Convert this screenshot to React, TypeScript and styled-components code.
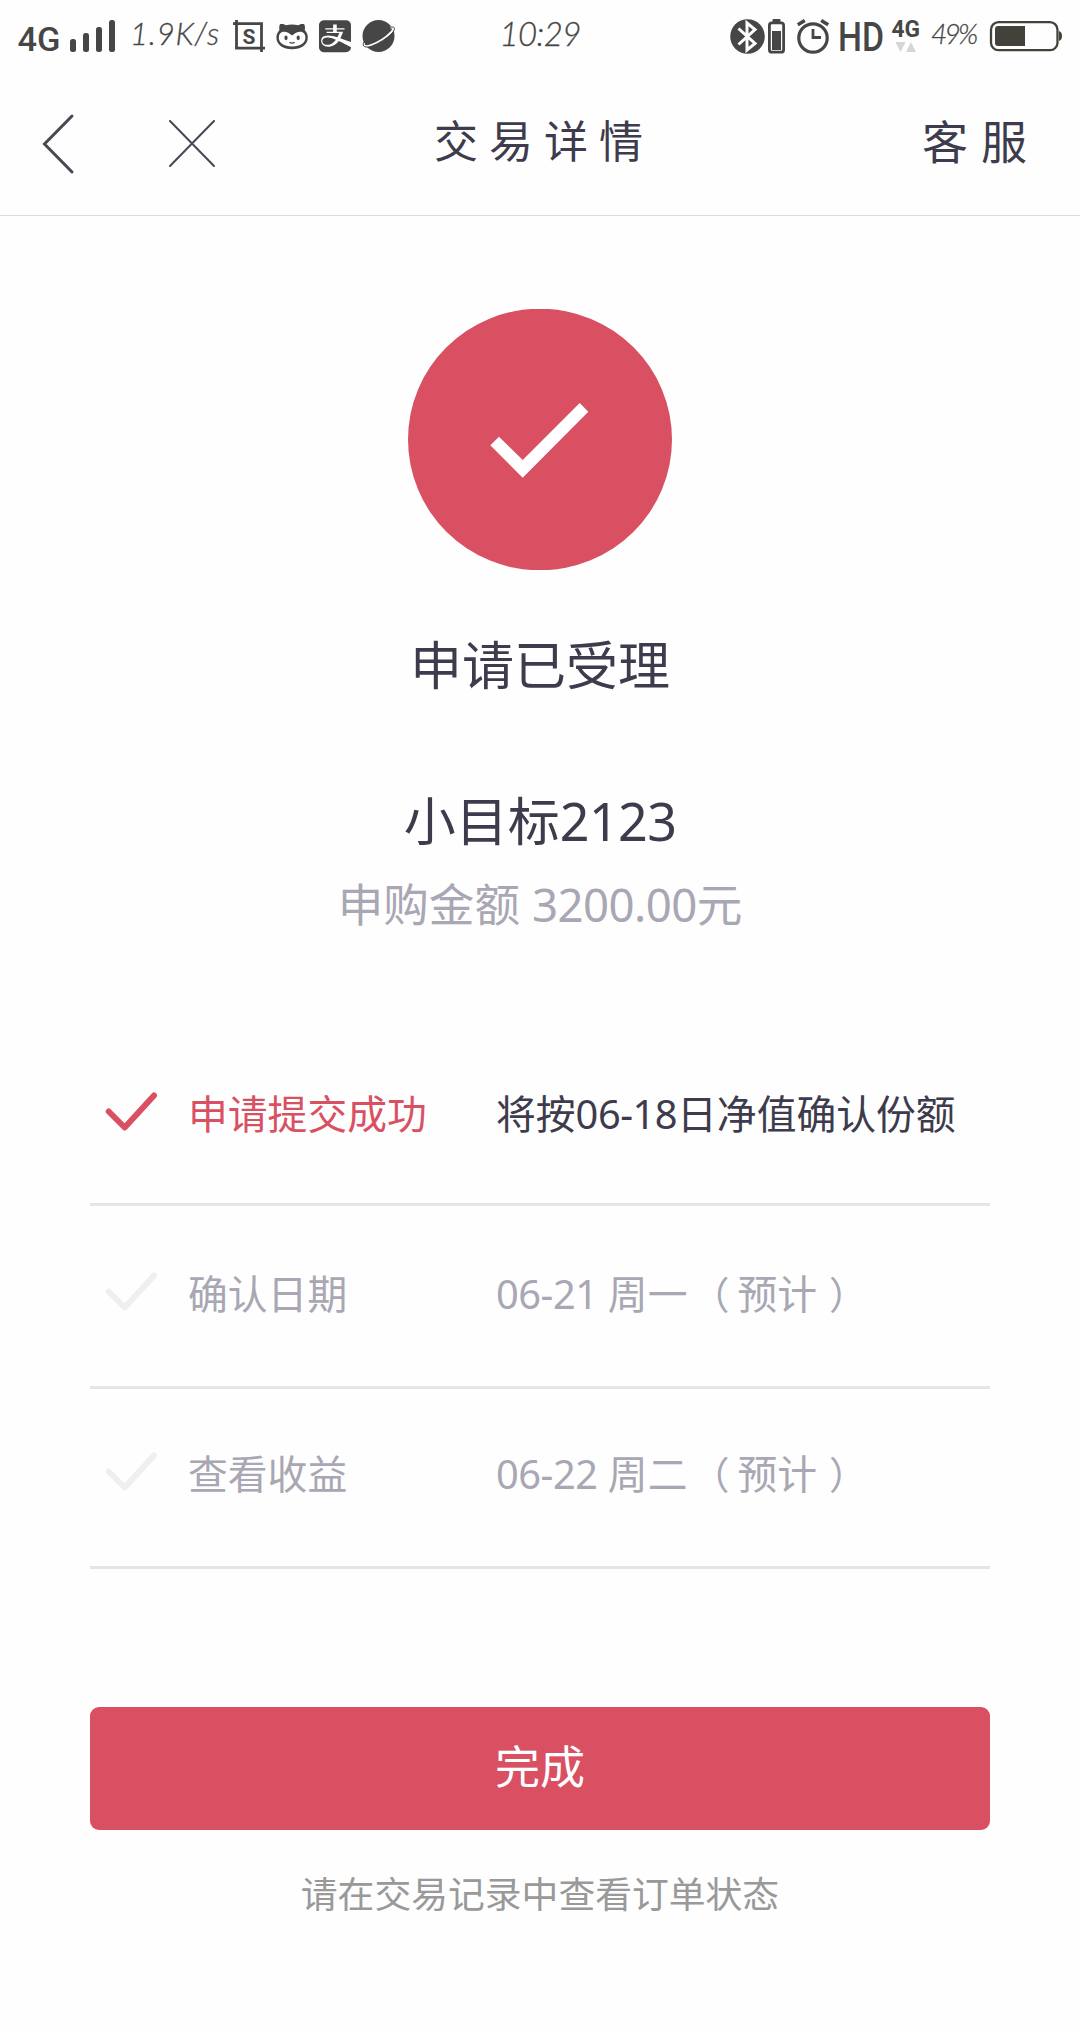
import React from "react";
import styled, { createGlobalStyle } from "styled-components";
import { FaAlipay } from "react-icons/fa";

const ink = "#464646";
const dark = "#3d3b4c";
const muted = "#a8a7b3";
const accent = "#d95063";

const GlobalStyle = createGlobalStyle`
  * { box-sizing: border-box; }
  body {
    margin: 0;
    background: #fefefe;
    font-family: "Noto Sans", "Noto Sans CJK SC", sans-serif;
    color: ${dark};
  }
`;

const Screen = styled.div`
  width: 1080px;
  height: 2034px;
  display: flex;
  flex-direction: column;
  overflow: hidden;
`;

/* ---------- status bar ---------- */

const StatusBar = styled.div`
  display: grid;
  grid-template-columns: 1fr auto 1fr;
  height: 72px;
  padding: 0 16px 0 18px;
  color: ${ink};
`;

const Cluster = styled.div<{ $end?: boolean }>`
  display: flex;
  align-items: flex-start;
  justify-content: ${(p) => (p.$end ? "flex-end" : "flex-start")};
`;

const Glyph = styled.svg<{ $gap?: number }>`
  display: block;
  flex: none;
  height: 72px;
  margin-left: ${(p) => p.$gap ?? 0}px;
  overflow: visible;
`;

const HandText = styled.span<{ $width: number; $size: number; $gap?: number; $spacing?: number }>`
  flex: none;
  width: ${(p) => p.$width}px;
  margin-left: ${(p) => p.$gap ?? 0}px;
  font: italic 300 ${(p) => p.$size}px / 67px Lato, sans-serif;
  letter-spacing: ${(p) => p.$spacing ?? 0}px;
  white-space: nowrap;
  -webkit-text-stroke: 0.3px ${ink};
`;

const AppBadge = styled.span`
  display: flex;
  flex: none;
  align-items: center;
  justify-content: center;
  width: 32px;
  height: 32px;
  margin: 20px 0 0 10px;
  svg {
    flex: none;
    width: 32px;
    height: 36.5px;
  }
`;

type StripProps = { x: number; w: number; gap?: number; children: React.ReactNode };

/* Every status icon shares the bar's vertical scale; x is its left edge in the bar. */
const Strip = ({ x, w, gap, children }: StripProps) => (
  <Glyph $gap={gap} width={w} height={72} viewBox={`${x} 0 ${w} 72`} fill={ink}>
    {children}
  </Glyph>
);

const NetworkLabel = () => (
  <Strip x={18} w={44}>
    <text x="17.5" y="51" fontFamily="Roboto" fontWeight="500" fontSize="33" textLength="43" lengthAdjust="spacingAndGlyphs">
      4G
    </text>
  </Strip>
);

const Signal = () => (
  <Strip x={68} w={50} gap={6}>
    <rect x="70" y="39" width="6" height="13" rx="2.5" />
    <rect x="83" y="33" width="6" height="19" rx="2.5" />
    <rect x="96" y="27" width="6" height="25" rx="2.5" />
    <rect x="109" y="20" width="6" height="32" rx="2.5" />
  </Strip>
);

const CropS = () => (
  <Strip x={231} w={36} gap={9}>
    <path d="M233 23.7H261.5V52M236.5 20V48.2H265" fill="none" stroke={ink} strokeWidth="2.8" />
    <text x="249" y="43.5" textAnchor="middle" fontFamily="Roboto" fontWeight="700" fontSize="21">
      S
    </text>
  </Strip>
);

const Cat = () => (
  <Strip x={275} w={34} gap={8}>
    <path d="M280 24.2c2.4-.5 4.200 .2 5.900 1a30 30 0 0 1 12.400 0c1.700-.8 3.500-1.500 5.900-1 1 2.300 .9 4 .5 5.800 2 2.200 3.100 4.500 3.100 7.400 0 7.600-6.900 11.800-15.700 11.800s-15.700-4.200-15.700-11.800c0-2.900 1.100-5.200 3.100-7.400-.4-1.800-.5-3.500 .5-5.800z" />
    <path
      d="M283 31.800c3.200-.4 6 .8 9.100 3.800 3.100-3 5.900-4.200 9.100-3.800 2.800.7 4.200 3 4.200 5.700 0 5.700-5 8.900-13.300 8.900s-13.300-3.200-13.300-8.900c0-2.700 1.400-5 4.200-5.700z"
      fill="#fefefe"
    />
    <ellipse cx="286" cy="37.800" rx="1.600" ry="2.400" />
    <ellipse cx="298.200" cy="37.800" rx="1.600" ry="2.400" />
    <path d="M289.500 42.300q2.600 1.800 5.200 0" fill="none" stroke={ink} strokeWidth="1.300" />
  </Strip>
);

const Planet = () => (
  <Strip x={361} w={36} gap={10}>
    <circle cx="378.500" cy="36" r="16" />
    <path
      d="M364.200 43.200C362.500 46.500 366 47 371 45.200C378 42.600 386 37.600 391 32.400C394.600 28.600 394.500 26.500 390.500 27.600"
      fill="none"
      stroke="#fefefe"
      strokeWidth="2.200"
    />
    <path
      d="M363.600 42.500C361.500 47 366 48 371.500 46.200C379 43.400 387 38.400 392 33.200C396 28.600 395 26 390.800 27.300"
      fill="none"
      stroke={ink}
      strokeWidth="1"
      strokeLinecap="round"
    />
  </Strip>
);

const Bluetooth = () => (
  <Strip x={730} w={35}>
    <circle cx="747.500" cy="36.500" r="17.300" />
    <path d="M738.500 28.500L755 43.500L747 50V23L755 29.500L738.500 44.500" fill="none" stroke="#fefefe" strokeWidth="3" />
  </Strip>
);

const DeviceBattery = () => (
  <Strip x={768} w={17} gap={3}>
    <rect x="772.500" y="19" width="8" height="4" rx="1" />
    <rect x="769.400" y="22.800" width="14.200" height="29.400" rx="2.500" fill="none" stroke={ink} strokeWidth="2.800" />
    <rect x="772" y="31" width="9" height="19" />
  </Strip>
);

const Alarm = () => (
  <Strip x={796} w={34} gap={11}>
    <g fill="none" stroke={ink} strokeWidth="3.200">
      <circle cx="813" cy="38" r="14.200" />
      <path d="M813 29V37.500H821" strokeWidth="2.800" />
      <path d="M797.800 24.700L804.800 20.400M821.200 20.400L828.200 24.700" strokeWidth="3.500" />
    </g>
  </Strip>
);

const HdLabel = () => (
  <Strip x={838} w={48} gap={8}>
    <text x="838" y="51" fontFamily="Roboto" fontWeight="500" fontSize="40.500" textLength="46" lengthAdjust="spacingAndGlyphs">
      HD
    </text>
  </Strip>
);

const DataLabel = () => (
  <Strip x={891} w={30} gap={5}>
    <text x="891.500" y="36.800" fontFamily="Roboto" fontWeight="700" fontSize="24.500" textLength="28.500" lengthAdjust="spacingAndGlyphs">
      4G
    </text>
    <path d="M895.500 42H905.500L900.500 52ZM906 52H916L911 42Z" fill="#d6d6d6" />
  </Strip>
);

const PowerLevel = () => (
  <Strip x={989} w={75} gap={11}>
    <rect x="991" y="22.200" width="66.500" height="28" rx="7.500" fill="none" stroke="#42423b" strokeWidth="2.300" />
    <path d="M998 26H1025V46H998Q995 46 995 43V29Q995 26 998 26Z" fill="#42423b" />
    <path d="M1059 31Q1062 32 1062 36T1059 41Z" fill="#42423b" />
  </Strip>
);

/* ---------- navigation ---------- */

const NavBar = styled.header`
  display: grid;
  grid-template-columns: 1fr auto 1fr;
  align-items: center;
  height: 144px;
  padding: 0 48px 0 42px;
  border-bottom: 1px solid #dcdcde;
`;

const NavActions = styled.div`
  display: flex;
  align-items: center;
  gap: 93px;
  svg {
    display: block;
    fill: none;
    stroke: #484753;
    stroke-linecap: round;
  }
`;

const NavText = styled.span<{ $end?: boolean }>`
  justify-self: ${(p) => (p.$end ? "end" : "center")};
  font: 400 ${(p) => (p.$end ? 46 : 44)}px / 64px "Noto Sans CJK SC", sans-serif;
  letter-spacing: ${(p) => (p.$end ? 13 : 11)}px;
  margin: ${(p) => (p.$end ? "0 -8px 10px 0" : "0 -14px 10px 0")};
`;

/* ---------- result ---------- */

const Result = styled.section`
  display: flex;
  flex-direction: column;
  align-items: center;
  padding-top: 93px;
`;

const Seal = styled.svg`
  display: block;
  width: 264px;
  height: 261px;
`;

const Line = styled.p<{ $size: number; $top: number; $color?: string }>`
  margin: ${(p) => p.$top}px 0 0;
  font-size: ${(p) => p.$size}px;
  line-height: 72px;
  color: ${(p) => p.$color ?? dark};
  white-space: pre;
`;

const Digits = styled.span`
  letter-spacing: -0.012em;
`;

/* ---------- steps ---------- */

const Steps = styled.ul`
  list-style: none;
  margin: 86px 90px 0;
  padding: 0;
`;

const Step = styled.li<{ $height: number; $inset: number }>`
  display: grid;
  grid-template-columns: 98px 308px 1fr;
  align-items: start;
  height: ${(p) => p.$height}px;
  padding-top: ${(p) => p.$inset}px;
  border-bottom: 3px solid #e4e4ea;
  font-size: 39.8px;
  line-height: 60px;
  white-space: pre;
`;

const Tick = styled.svg<{ $on: boolean }>`
  display: block;
  width: 54px;
  height: 42px;
  margin: 7px 0 0 14px;
  fill: none;
  stroke: ${(p) => (p.$on ? accent : "#efefef")};
  stroke-width: 6px;
  stroke-linecap: round;
  stroke-linejoin: round;
`;

const StepName = styled.span<{ $on: boolean }>`
  color: ${(p) => (p.$on ? accent : muted)};
`;

const StepInfo = styled.span<{ $on: boolean }>`
  color: ${(p) => (p.$on ? dark : muted)};
`;

const Bracket = styled.span<{ $close?: boolean }>`
  font-size: 38px;
  line-height: 0;
  margin: ${(p) => (p.$close ? "0 0 0 12px" : "0 8px 0 4px")};
`;

/* ---------- footer ---------- */

const DoneButton = styled.button`
  display: block;
  height: 123px;
  margin: 138px 90px 0;
  padding: 0 0 8px;
  border: 0;
  border-radius: 9px;
  background: ${accent};
  color: #fff;
  font: 400 45px / 60px "Noto Sans CJK SC", sans-serif;
`;

const Hint = styled.p`
  margin: 37px 0 0;
  text-align: center;
  font-size: 36.8px;
  line-height: 54px;
  color: #999;
`;

const steps = [
  { name: "申请提交成功", lead: "将按", date: "06-18", info: "日净值确认份额", on: true, height: 180, inset: 58 },
  { name: "确认日期", date: "06-21", info: " 周一", note: "预计", on: false, height: 183, inset: 58 },
  { name: "查看收益", date: "06-22", info: " 周二", note: "预计", on: false, height: 180, inset: 55 },
];

export default function App() {
  return (
    <Screen>
      <GlobalStyle />
      <StatusBar>
        <Cluster>
          <NetworkLabel />
          <Signal />
          <HandText $width={92} $gap={12} $size={31} $spacing={0.8}>1.9K/s</HandText>
          <CropS />
          <Cat />
          <AppBadge>
            <FaAlipay preserveAspectRatio="none" />
          </AppBadge>
          <Planet />
        </Cluster>
        <HandText $width={83} $size={33} $spacing={-0.6}>10:29</HandText>
        <Cluster $end>
          <Bluetooth />
          <DeviceBattery />
          <Alarm />
          <HdLabel />
          <DataLabel />
          <HandText $width={47} $gap={10} $size={28} $spacing={-2.8}>49%</HandText>
          <PowerLevel />
        </Cluster>
      </StatusBar>

      <NavBar>
        <NavActions>
          <svg width="34" height="62" viewBox="0 0 34 62" strokeWidth="3">
            <path d="M30 3L2.500 31L30 59" />
          </svg>
          <svg width="46" height="47" viewBox="0 0 46 47" strokeWidth="2">
            <path d="M1 1L45 46M45 1L1 46" />
          </svg>
        </NavActions>
        <NavText>交易详情</NavText>
        <NavText $end>客服</NavText>
      </NavBar>

      <Result>
        <Seal viewBox="0 0 264 261">
          <ellipse cx="132" cy="130.500" rx="132" ry="130.800" fill={accent} />
          <path d="M82.300 136.300L91 127.700L114.700 151L171.700 94L180.300 102.700L114.700 168.700Z" fill="#fff" />
        </Seal>
        <Line $size={52} $top={59}>申请已受理</Line>
        <Line $size={52} $top={84}>
          小目标<Digits>2123</Digits>
        </Line>
        <Line $size={45.6} $top={11} $color={muted}>
          申购金额 <Digits>3200.00</Digits>元
        </Line>
      </Result>

      <Steps>
        {steps.map((s) => (
          <Step key={s.name} $height={s.height} $inset={s.inset}>
            <Tick $on={s.on} viewBox="104 1091 54 42">
              <path d="M108.700 1111.500L124.700 1127.500L154 1095.500" />
            </Tick>
            <StepName $on={s.on}>{s.name}</StepName>
            <StepInfo $on={s.on}>
              {s.lead}
              <Digits>{s.date}</Digits>
              {s.info}
              {s.note && (
                <>
                  <Bracket>（</Bracket>
                  {s.note}
                  <Bracket $close>）</Bracket>
                </>
              )}
            </StepInfo>
          </Step>
        ))}
      </Steps>

      <DoneButton>完成</DoneButton>
      <Hint>请在交易记录中查看订单状态</Hint>
    </Screen>
  );
}
